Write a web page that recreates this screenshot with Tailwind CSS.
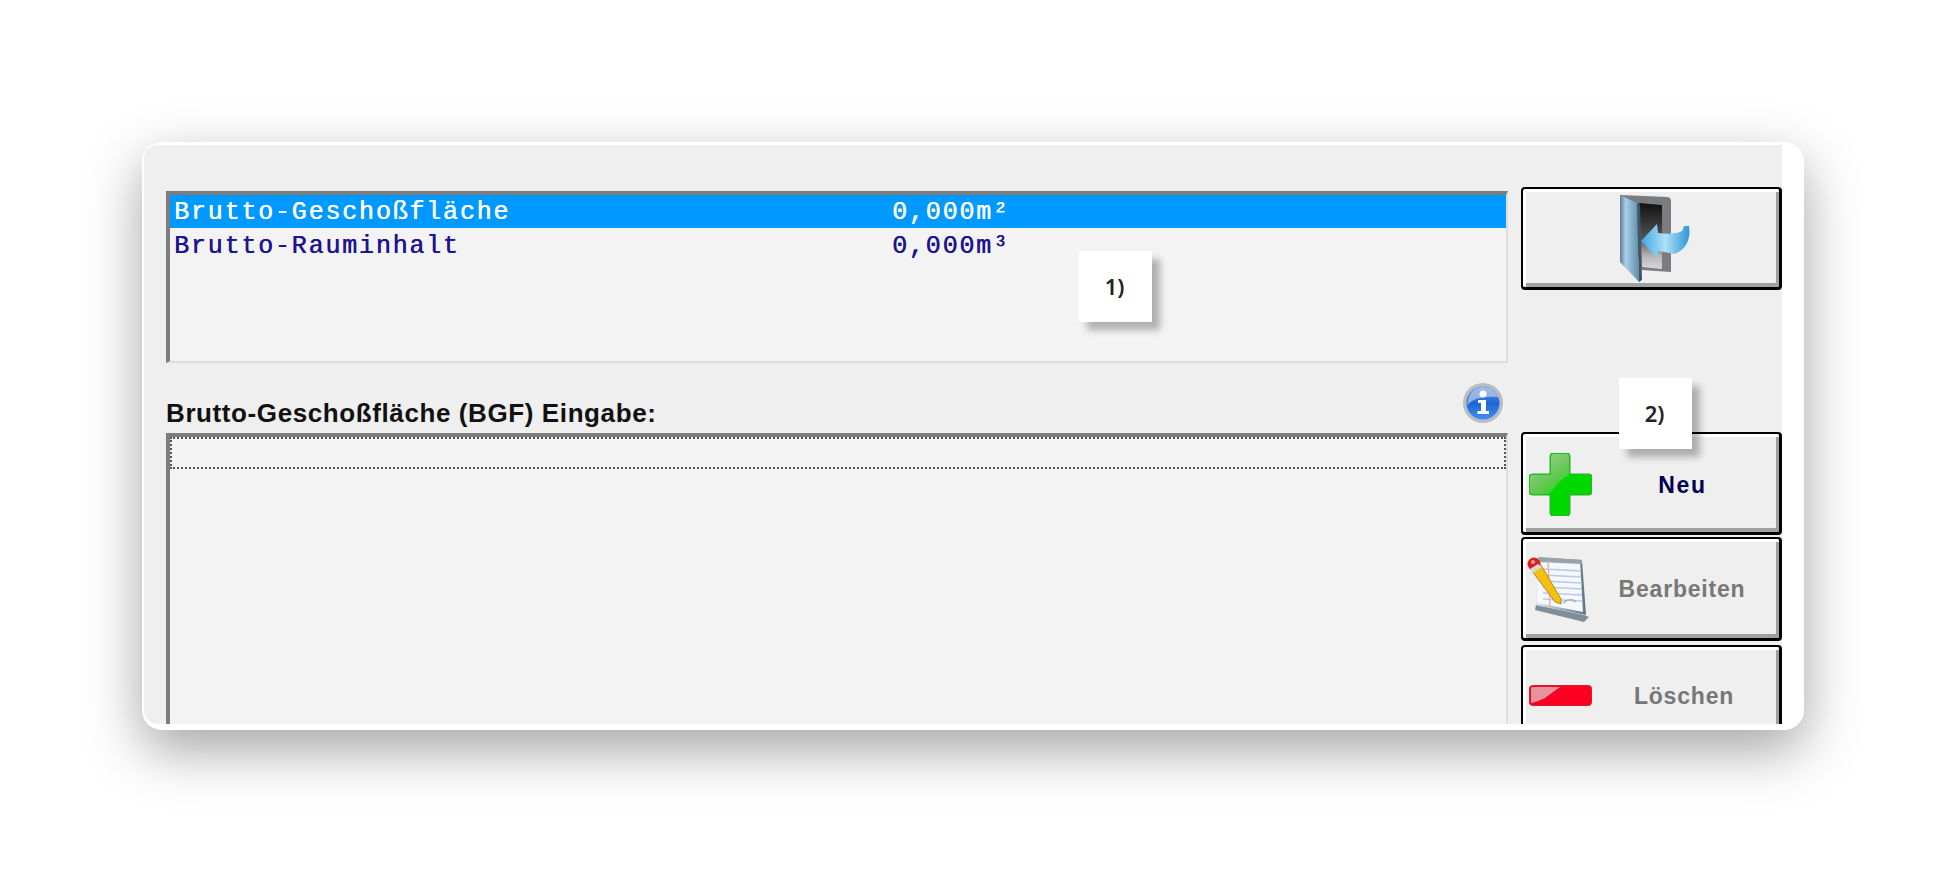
<!DOCTYPE html>
<html lang="en">
  <head>
    <meta charset="UTF-8" />
    <title>Brutto-Geschoßfläche</title>
    <script src="https://cdn.jsdelivr.net/npm/@tailwindcss/browser@4"></script>
  </head>
  <body class="bg-white h-[872px] overflow-hidden font-['Liberation_Sans',sans-serif]">
    <!-- card -->
    <div class="relative ml-[142px] mt-[142px] w-[1662px] h-[588px] bg-white rounded-[20px] pl-[2px] pt-[3px] pr-[22px] pb-[6px] shadow-[0_20px_55px_rgba(0,0,0,0.36)] float-left">
      <div class="flex h-full bg-[#efefef] overflow-hidden rounded-tl-[14px] rounded-bl-[14px]">
        <!-- left column -->
        <div class="ml-[22px] mt-[46px] w-[1342px] shrink-0">
          <div class="h-[172px] bg-[#f3f3f3] border-t-[4px] border-l-[4px] border-r-2 border-b-2 border-t-[#7d7d7d] border-l-[#7d7d7d] border-r-[#dedede] border-b-[#dedede] font-['Liberation_Mono',monospace] text-[25px] tracking-[1.8px] [text-shadow:0.5px_0_0_currentColor]">
            <div class="flex h-[33px] items-center bg-[#0099ff] text-white">
              <span class="w-[722px] pl-[4px] mt-[2px]">Brutto-Geschoßfläche</span>
              <span class="mt-[2px]">0,000m²</span>
            </div>
            <div class="flex h-[35px] items-center text-[#1c1490]">
              <span class="w-[722px] pl-[4px] mt-[2px]">Brutto-Rauminhalt</span>
              <span class="mt-[2px]">0,000m³</span>
            </div>
          </div>

          <div class="flex justify-between items-start h-[70px] pr-[5px]">
            <label class="mt-[35px] leading-[30px] text-[26px] font-bold text-[#111] tracking-[0.6px]">Brutto-Geschoßfläche (BGF) Eingabe:</label>
            <svg class="mt-[20px]" width="40" height="40" viewBox="0 0 40 40">
              <defs>
                <linearGradient id="infoBlue" x1="0" y1="0" x2="0" y2="1">
                  <stop offset="0" stop-color="#6f9fe0" />
                  <stop offset="0.5" stop-color="#1c66d4" />
                  <stop offset="1" stop-color="#3f8ef0" />
                </linearGradient>
              </defs>
              <circle cx="20" cy="20" r="20" fill="#b9bcc2" />
              <circle cx="20" cy="20" r="16.5" fill="url(#infoBlue)" />
              <path d="M4 22 Q12 12 36 14 Q30 4 20 4 Q6 5 4 22Z" fill="#b4c6e6" opacity="0.75" />
              <circle cx="20" cy="11" r="3.5" fill="#fff" />
              <path d="M15 17 H23 V28 H26 V31 H14.5 V28 H18 V20 H15Z" fill="#fff" />
            </svg>
          </div>

          <div class="h-[400px] bg-[#f3f3f3] border-t-[4px] border-l-[4px] border-r-2 border-t-[#7d7d7d] border-l-[#7d7d7d] border-r-[#dedede]">
            <div class="h-[32px] border-2 border-dotted border-[#555]"></div>
          </div>
        </div>

        <!-- right column -->
        <div class="ml-[13px] mt-[42px] w-[261px] shrink-0">
          <button class="flex items-center justify-center w-full h-[103px] border-2 border-b-[3px] border-r-[3px] border-black rounded-[4px] bg-[#efefef] shadow-[inset_3px_3px_0_#fff,inset_-3px_-4px_0_#a0a0a0]">
            <svg class="mt-[2px] ml-[7px]" width="70" height="90" viewBox="0 0 70 90">
              <defs>
                <linearGradient id="doorLeaf" x1="0" y1="0" x2="1" y2="0">
                  <stop offset="0" stop-color="#5f7f96" />
                  <stop offset="0.3" stop-color="#a9cfe6" />
                  <stop offset="1" stop-color="#5f8dab" />
                </linearGradient>
                <linearGradient id="doorHole" x1="0" y1="0" x2="0" y2="1">
                  <stop offset="0" stop-color="#111" />
                  <stop offset="0.55" stop-color="#555" />
                  <stop offset="0.8" stop-color="#b5b5b5" />
                  <stop offset="1" stop-color="#d8d8d8" />
                </linearGradient>
                <linearGradient id="doorArrow" x1="0" y1="0" x2="1" y2="0">
                  <stop offset="0" stop-color="#3fa6e0" />
                  <stop offset="0.5" stop-color="#aee0f8" />
                  <stop offset="1" stop-color="#2f97d6" />
                </linearGradient>
              </defs>
              <path d="M0 1 L48 3 Q51 4 51 7 V78 L22 76 Z" fill="#7a7c7f" />
              <path d="M19 9 L42 11 V75 L22 73 Z" fill="url(#doorHole)" />
              <path d="M0 1 L17 9 L19 88 L0 68 Z" fill="url(#doorLeaf)" />
              <path d="M17 9 L20 10 L22 86 L19 88 Z" fill="#3d5566" />
              <path d="M21 47 L37 30 L38 39 Q55 41 62 37 L64 32 L69 32 Q72 52 55 60 L38 57 L37 64 Z" fill="url(#doorArrow)" />
            </svg>
          </button>

          <button class="flex items-center w-full h-[103px] mt-[142px] pl-[6px] pr-[6px] border-2 border-b-[3px] border-r-[3px] border-black rounded-[4px] bg-[#efefef] shadow-[inset_3px_3px_0_#fff,inset_-3px_-4px_0_#a0a0a0]">
            <svg width="63" height="63" viewBox="0 0 63 63" class="shrink-0 mt-[2px]">
              <defs>
                <linearGradient id="plusShine" x1="0" y1="0" x2="0.7" y2="1">
                  <stop offset="0" stop-color="#a2d696" />
                  <stop offset="0.6" stop-color="#6cc85c" />
                  <stop offset="1" stop-color="#34cf26" />
                </linearGradient>
              </defs>
              <path d="M24 0 H38 Q41 0 41 3 V21 H60 Q63 21 63 24 V39 Q63 42 60 42 H41 V60 Q41 63 38 63 H24 Q21 63 21 60 V42 H3 Q0 42 0 39 V24 Q0 21 3 21 H21 V3 Q21 0 24 0Z" fill="#00d800" stroke="#3aa53a" stroke-width="1" />
              <path d="M24 1 H38 Q40 1 40 3 V22 L30 29 L20 41 H3 Q1 41 1 39 V24 Q1 22 3 22 H22 V3 Q22 1 24 1Z" fill="url(#plusShine)" />
            </svg>
            <span class="flex-1 text-center mt-[4px] text-[23px] font-bold tracking-[1.6px] text-[#00004f]">Neu</span>
          </button>

          <button class="flex items-center w-full h-[104px] mt-[2px] pl-[3px] pr-[6px] border-2 border-b-[3px] border-r-[3px] border-black rounded-[4px] bg-[#efefef] shadow-[inset_3px_3px_0_#fff,inset_-3px_-4px_0_#a0a0a0]">
            <svg width="65" height="68" viewBox="0 0 65 68" class="shrink-0">
              <defs>
                <linearGradient id="padEdge" x1="0" y1="0" x2="1" y2="0">
                  <stop offset="0" stop-color="#dfe6ec" />
                  <stop offset="1" stop-color="#5f7484" />
                </linearGradient>
              </defs>
              <path d="M10 50 L58 60 L63 62 L58 67 L9 55 Z" fill="#7f8e9a" />
              <path d="M12 2 L56 5 L60 60 L10 50 Z" fill="url(#padEdge)" />
              <path d="M12 3 L54 6 L57 57 L11 48 Z" fill="#f4f7fb" />
              <path d="M12 2 L56 5 L56 9 L13 7 Z" fill="#98a2aa" />
              <path d="M17 14 L55 16 M17 20 L55 22 M17 26 L56 28 M17 32 L56 34 M17 38 L56 40 M17 44 L56 46" stroke="#b9cbe0" stroke-width="1.4" />
              <path d="M22 6 L24 52" stroke="#f2a7a0" stroke-width="1.3" />
              <path d="M6 16 L15 10 L35 44 L35 49 L29 47 Z" fill="#f5bf0f" stroke="#9d7a12" stroke-width="0.8" />
              <circle cx="8" cy="9" r="6.5" fill="#d92020" />
              <circle cx="7" cy="7" r="2" fill="#f4a0a0" />
              <path d="M4 14 L12 9 L16 12 L7 18 Z" fill="#d8d8d8" />
              <path d="M37 48 Q44 42 50 47" stroke="#a9adb1" stroke-width="1.5" fill="none" />
            </svg>
            <span class="flex-1 text-center mt-[1px] text-[23px] font-bold tracking-[0.8px] text-[#777]">Bearbeiten</span>
          </button>

          <button class="flex items-center w-full h-[102px] mt-[4px] pl-[6px] pr-[3px] border-2 border-b-[3px] border-r-[3px] border-black rounded-[4px] bg-[#efefef] shadow-[inset_3px_3px_0_#fff,inset_-3px_-4px_0_#a0a0a0]">
            <svg width="63" height="21" viewBox="0 0 63 21" class="shrink-0">
              <rect x="0.5" y="0.5" width="62" height="20" rx="3" fill="#fb0020" stroke="#d0202f" />
              <path d="M2 3 Q2 2 4 2 H31 L16 13 Q8 17 2 18 Z" fill="#e6939c" />
            </svg>
            <span class="flex-1 text-center mt-[1px] text-[23px] font-bold tracking-[0.8px] text-[#777]">Löschen</span>
          </button>
        </div>
      </div>

      <!-- callouts -->
      <div class="absolute left-[937px] top-[109px] w-[73px] h-[71px] flex items-center justify-center pr-[2px] bg-white shadow-[8px_8px_7px_rgba(0,0,0,0.28)] font-['Noto_Sans',sans-serif] font-semibold text-[22px] text-[#222]">1)</div>
      <div class="absolute left-[1477px] top-[236px] w-[73px] h-[71px] flex items-center justify-center pr-[2px] bg-white shadow-[8px_8px_7px_rgba(0,0,0,0.28)] font-['Noto_Sans',sans-serif] font-semibold text-[22px] text-[#222]">2)</div>
    </div>
  </body>
</html>
